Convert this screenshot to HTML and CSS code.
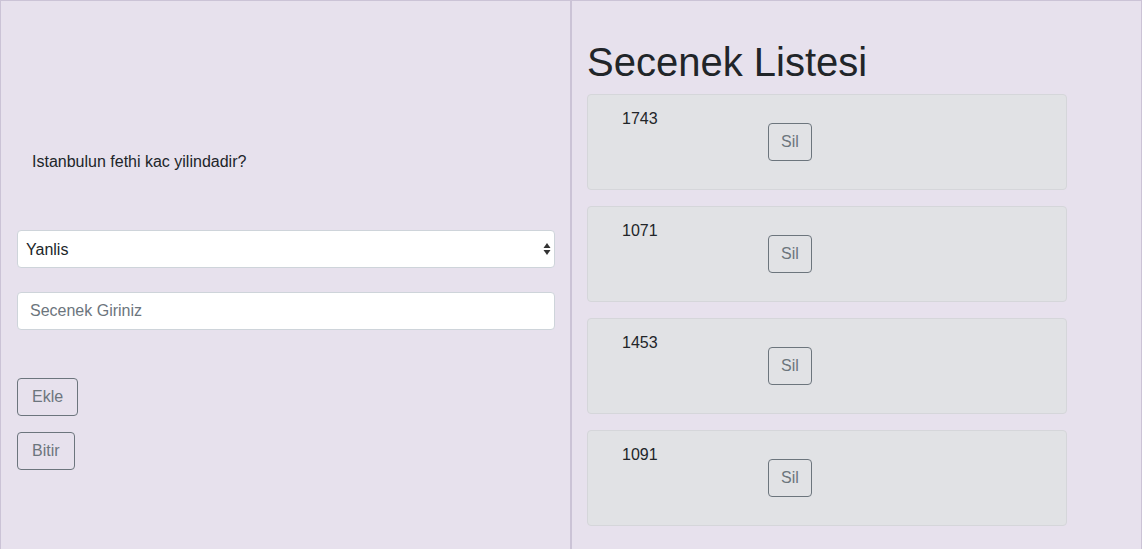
FILE: index.html
```html
<!DOCTYPE html>
<html lang="tr">
<head>
<meta charset="utf-8">
<title>Secenek Listesi</title>
<link rel="stylesheet" href="styles.css">
</head>
<body>
<div class="page">
  <section class="panel left">
    <p class="question">Istanbulun fethi kac yilindadir?</p>
    <div class="select-wrap">
      <select class="field select">
        <option>Yanlis</option>
        <option>Dogru</option>
      </select>
      <svg class="select-arrows" width="8" height="14" viewBox="0 0 8 14" aria-hidden="true">
        <path d="M4 1 L7.5 6 L0.5 6 Z" fill="#333"/>
        <path d="M4 13 L7.5 8 L0.5 8 Z" fill="#333"/>
      </svg>
    </div>
    <input class="field input" type="text" placeholder="Secenek Giriniz">
    <div class="actions">
      <button class="btn btn-wide">Ekle</button>
      <button class="btn btn-wide">Bitir</button>
    </div>
  </section>
  <section class="panel right">
    <h1 class="title">Secenek Listesi</h1>
    <div class="list">
      <div class="card"><span class="num">1743</span><div class="cell"><button class="btn">Sil</button></div></div>
      <div class="card"><span class="num">1071</span><div class="cell"><button class="btn">Sil</button></div></div>
      <div class="card"><span class="num">1453</span><div class="cell"><button class="btn">Sil</button></div></div>
      <div class="card"><span class="num">1091</span><div class="cell"><button class="btn">Sil</button></div></div>
    </div>
  </section>
</div>
</body>
</html>
```
FILE: styles.css
```css
* { box-sizing: border-box; }
html, body { margin: 0; padding: 0; }
body {
  font-family: "Liberation Sans", Arial, sans-serif;
  font-size: 16px;
  line-height: 1.5;
  color: #212529;
  background: #e7e1ed;
  overflow: hidden;
}
.page {
  display: grid;
  grid-template-columns: 571px 571px;
  min-height: 560px;
}
.panel {
  border-top: 1px solid #cbc3d6;
  background: #e7e1ed;
}
.left {
  border-left: 1px solid #cbc3d6;
  border-right: 1px solid #cbc3d6;
  padding: 0 15px 0 16px;
}
.right {
  border-left: 1px solid #cbc3d6;
  border-right: 1px solid #cbc3d6;
  padding: 0 15px 0 15px;
}
.question {
  margin: 149px 0 0 15px;
}
.select-wrap {
  position: relative;
  margin-top: 56px;
}
.field {
  display: block;
  width: 100%;
  height: 38px;
  border: 1px solid #ced4da;
  border-radius: 4px;
  background: #fff;
  font-family: inherit;
  font-size: 16px;
  color: #212529;
}
.select {
  appearance: none;
  -webkit-appearance: none;
  padding: 0 8px;
}
.select-arrows {
  position: absolute;
  right: 4px;
  top: 12px;
}
.input {
  margin-top: 24px;
  padding: 0 12px;
}
.input::placeholder { color: #6c757d; }
.actions {
  display: flex;
  flex-direction: column;
  align-items: flex-start;
  gap: 16px;
  margin-top: 48px;
}
.btn {
  display: inline-block;
  height: 38px;
  padding: 0 12px;
  font-family: inherit;
  font-size: 16px;
  line-height: 24px;
  color: #6c757d;
  background: transparent;
  border: 1px solid #6c757d;
  border-radius: 4px;
}
.btn-wide {
  padding: 0 14px;
}
.title {
  margin: 37px 0 8px;
  font-size: 40px;
  font-weight: 500;
  line-height: 48px;
  color: #212529;
}
.list {
  display: flex;
  flex-direction: column;
  gap: 16px;
}
.card {
  width: 480px;
  display: grid;
  grid-template-columns: 146px auto;
  align-items: start;
  padding: 12px 20px 12px 34px;
  background: #e1e2e5;
  border: 1px solid #d5d6da;
  border-radius: 4px;
}
.num { line-height: 24px; }
.cell { padding: 16px 0; }
```
